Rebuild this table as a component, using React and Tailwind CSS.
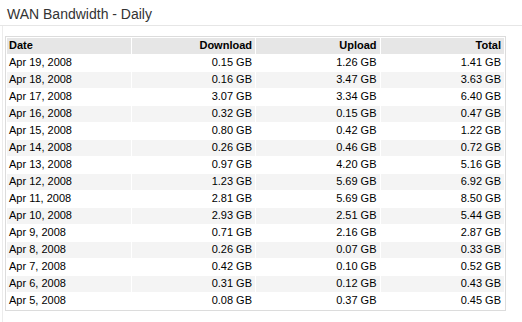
import React from 'react';

const rows = [
  ['Apr 19, 2008', '0.15 GB', '1.26 GB', '1.41 GB'],
  ['Apr 18, 2008', '0.16 GB', '3.47 GB', '3.63 GB'],
  ['Apr 17, 2008', '3.07 GB', '3.34 GB', '6.40 GB'],
  ['Apr 16, 2008', '0.32 GB', '0.15 GB', '0.47 GB'],
  ['Apr 15, 2008', '0.80 GB', '0.42 GB', '1.22 GB'],
  ['Apr 14, 2008', '0.26 GB', '0.46 GB', '0.72 GB'],
  ['Apr 13, 2008', '0.97 GB', '4.20 GB', '5.16 GB'],
  ['Apr 12, 2008', '1.23 GB', '5.69 GB', '6.92 GB'],
  ['Apr 11, 2008', '2.81 GB', '5.69 GB', '8.50 GB'],
  ['Apr 10, 2008', '2.93 GB', '2.51 GB', '5.44 GB'],
  ['Apr 9, 2008', '0.71 GB', '2.16 GB', '2.87 GB'],
  ['Apr 8, 2008', '0.26 GB', '0.07 GB', '0.33 GB'],
  ['Apr 7, 2008', '0.42 GB', '0.10 GB', '0.52 GB'],
  ['Apr 6, 2008', '0.31 GB', '0.12 GB', '0.43 GB'],
  ['Apr 5, 2008', '0.08 GB', '0.37 GB', '0.45 GB'],
];

const App = () => {
  return (
    <div className="w-[522px] h-[322px] bg-white font-['Liberation_Sans',Arial,sans-serif] overflow-hidden">
      {/* Title */}
      <div className="h-[26px] pl-[7px] pt-[6px] text-[14px] leading-[16px] text-[#333] border-b border-[#e6e6e6]">
        WAN Bandwidth - Daily
      </div>

      {/* Panel body */}
      <div className="ml-[2px] h-[296px] border-l border-[#ececec] pl-[2px] pt-[10px]">
        <table className="w-[501px] table-fixed border-separate border-spacing-[1px] border border-[#dcdcdc] text-[11px] leading-[14px] text-black">
          <thead>
            <tr className="bg-[#e6e6e6] font-bold">
              <th className="h-[16px] pl-[2px] pb-[2px] text-left font-bold">Date</th>
              <th className="h-[16px] pr-[3px] pb-[2px] text-right font-bold">Download</th>
              <th className="h-[16px] pr-[3px] pb-[2px] text-right font-bold">Upload</th>
              <th className="h-[16px] pr-[3px] pb-[2px] text-right font-bold">Total</th>
            </tr>
          </thead>
          <tbody>
            {rows.map((r, i) => (
              <tr key={r[0]} className={i % 2 === 1 ? 'bg-[#f4f4f4]' : 'bg-white'}>
                <td className="h-[16px] pl-[2px] pb-[2px] text-left">{r[0]}</td>
                <td className="h-[16px] pr-[3px] pb-[2px] text-right">{r[1]}</td>
                <td className="h-[16px] pr-[3px] pb-[2px] text-right">{r[2]}</td>
                <td className="h-[16px] pr-[3px] pb-[2px] text-right">{r[3]}</td>
              </tr>
            ))}
          </tbody>
        </table>
      </div>
    </div>
  );
};

export default App;
